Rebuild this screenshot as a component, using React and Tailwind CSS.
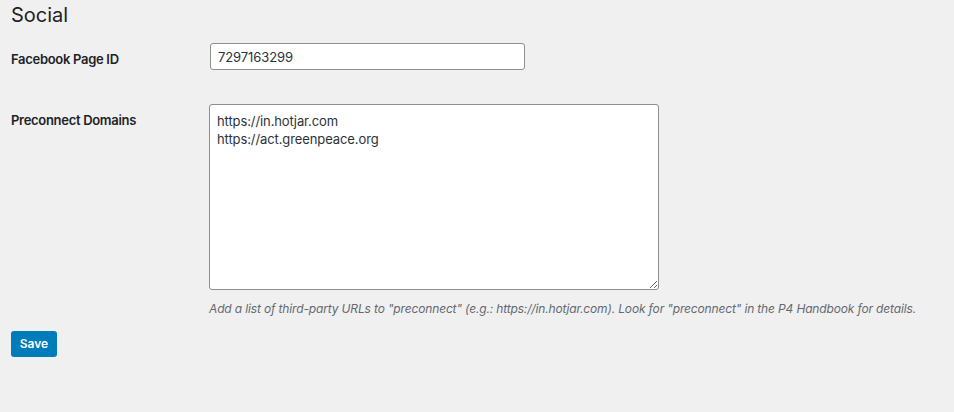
export default function App() {
  return (
    <div
      className="min-h-[412px] w-full bg-[#f0f0f1] pl-[11px] text-[#1d2327]"
      style={{ fontFamily: "Inter, 'Liberation Sans', sans-serif" }}
    >
      <h2 className="pt-[3px] text-[20px] leading-[24px] font-normal">Social</h2>

      <div className="mt-[16px] flex">
        <label className="w-[199px] pt-[7px] text-[13px] leading-[18px] font-semibold tracking-[-0.3px]">
          Facebook Page ID
        </label>
        <input
          type="text"
          defaultValue="7297163299"
          className="h-[27px] w-[315px] rounded-[3px] border border-[#8c8f94] bg-white px-[7px] text-[13px] tracking-[-0.1px] text-[#2c3338] outline-none"
        />
      </div>

      <div className="mt-[34px] flex">
        <label className="w-[198px] pt-[7px] text-[13px] leading-[18px] font-semibold tracking-[-0.3px]">
          Preconnect Domains
        </label>
        <div>
          <textarea
            defaultValue={"https://in.hotjar.com\nhttps://act.greenpeace.org"}
            className="block h-[186px] w-[450px] rounded-[3px] border border-[#8c8f94] bg-white px-[7px] py-[7px] text-[13px] leading-[18px] tracking-[-0.1px] text-[#2c3338] outline-none"
          />
          <p className="mt-[11px] text-[12px] leading-[16px] italic tracking-[-0.15px] text-[#646970]">
            Add a list of third-party URLs to "preconnect" (e.g.: https://in.hotjar.com). Look for "preconnect" in the P4 Handbook for details.
          </p>
        </div>
      </div>

      <button className="mt-[14px] h-[26px] w-[46px] rounded-[3px] bg-[#007cba] text-[12px] font-semibold text-white">
        Save
      </button>
    </div>
  );
}
